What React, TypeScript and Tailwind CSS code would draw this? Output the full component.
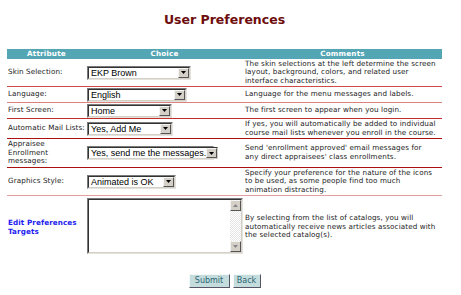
import React from "react";

const verdana = { fontFamily: '"DejaVu Sans", Verdana, sans-serif' };

function Select({ value, width }: { value: string; width: string }) {
  return (
    <div
      className={`flex h-[14px] items-stretch bg-white border-t-[#7a7a7a] border-l-[#7a7a7a] border-b-[#e4e2dc] border-r-[#e4e2dc] border ${width}`}
    >
      <div className="flex flex-1 items-stretch border border-t-[#333] border-l-[#333] border-b-[#d4d0c8] border-r-[#d4d0c8]">
        <span
          className="flex-1 overflow-hidden whitespace-nowrap pl-[2px] text-[9px] leading-[10px] text-black"
          style={{ fontFamily: '"Liberation Sans", Arial, sans-serif' }}
        >
          {value}
        </span>
        <span className="flex w-[11px] items-center justify-center bg-[#d4d0c8] border border-t-[#f4f4f4] border-l-[#f4f4f4] border-b-[#555] border-r-[#555]">
          <svg width="5" height="3" viewBox="0 0 5 3">
            <path d="M0 0h5L2.5 3z" fill="#000" />
          </svg>
        </span>
      </div>
    </div>
  );
}

// comment lines are broken where the original page breaks them
function Lines({ lines }: { lines: string[] }) {
  return (
    <>
      {lines.map((l, i) => (
        <div key={i} className="whitespace-nowrap">
          {l}
        </div>
      ))}
    </>
  );
}

function Row({
  h,
  line,
  label,
  choice,
  comment,
}: {
  h: string;
  line: string;
  label: React.ReactNode;
  choice: React.ReactNode;
  comment: string[];
}) {
  return (
    <div className={`grid grid-cols-[79px_157px_199px] items-center border-b ${h} ${line}`}>
      <div className="pl-[1px] text-[7.2px] leading-[8.6px] tracking-[0.1px] text-[#222]">{label}</div>
      <div className="pl-[1px]">{choice}</div>
      <div className="pl-[2px] text-[7.2px] leading-[8.6px] tracking-[0.1px] text-[#222]">
        <Lines lines={comment} />
      </div>
    </div>
  );
}

export default function App() {
  return (
    <div className="w-[461px] h-[295px] bg-white" style={verdana}>
      <div className="ml-[7px] w-[435px]">
        <div className="flex h-[49px] justify-center pt-[12px]">
          <h1 className="text-[12.5px] font-bold leading-[16px] text-[#6e0d0d]">
            User Preferences
          </h1>
        </div>

        {/* header */}
        <div className="grid h-[10px] grid-cols-[79px_157px_199px] items-center bg-[#55a6b5] text-center text-[7.2px] font-bold leading-[10px] tracking-[0.2px] text-white">
          <div>Attribute</div>
          <div>Choice</div>
          <div>Comments</div>
        </div>

        <Row
          h="h-[28px]"
          line="border-[#cf4a4a]"
          label="Skin Selection:"
          choice={<Select value="EKP Brown" width="w-[104px]" />}
          comment={[
            "The skin selections at the left determine the screen",
            "layout, background, colors, and related user",
            "interface characteristics.",
          ]}
        />
        <Row
          h="h-[16px]"
          line="border-[#dc8080]"
          label="Language:"
          choice={<Select value="English" width="w-[100px]" />}
          comment={["Language for the menu messages and labels."]}
        />
        <Row
          h="h-[16px]"
          line="border-[#c52c2c]"
          label="First Screen:"
          choice={<Select value="Home" width="w-[85px]" />}
          comment={["The first screen to appear when you login."]}
        />
        <Row
          h="h-[20px]"
          line="border-[#ad0f0f]"
          label="Automatic Mail Lists:"
          choice={<Select value="Yes, Add Me" width="w-[86px]" />}
          comment={[
            "If yes, you will automatically be added to individual",
            "course mail lists whenever you enroll in the course.",
          ]}
        />
        <Row
          h="h-[29px]"
          line="border-[#ad0f0f]"
          label={
            <>
              Appraisee
              <br />
              Enrollment
              <br />
              messages:
            </>
          }
          choice={<Select value="Yes, send me the messages." width="w-[127px]" />}
          comment={[
            "Send 'enrollment approved' email messages for",
            "any direct appraisees' class enrollments.",
          ]}
        />
        <Row
          h="h-[28px]"
          line="border-[#e4a0a0]"
          label="Graphics Style:"
          choice={<Select value="Animated is OK" width="w-[89px]" />}
          comment={[
            "Specify your preference for the nature of the icons",
            "to be used, as some people find too much",
            "animation distracting.",
          ]}
        />

        {/* targets row */}
        <div className="grid h-[59px] grid-cols-[79px_157px_199px] items-center">
          <div className="pl-[1px] pt-[3px] text-[7.2px] font-bold leading-[9px] tracking-[0.1px] text-[#1c1cf0]">
            Edit Preferences
            <br />
            Targets
          </div>
          <div className="pl-[1px]">
            <div className="flex h-[56px] w-[156px] border border-t-[#7a7a7a] border-l-[#7a7a7a] border-b-[#e4e2dc] border-r-[#e4e2dc] bg-white">
              <div className="flex flex-1 border border-t-[#333] border-l-[#333] border-b-[#d4d0c8] border-r-[#d4d0c8]">
                <div className="flex-1" />
                <div className="flex w-[11px] flex-col justify-between bg-[repeating-conic-gradient(#e6e6e6_0%_25%,#ffffff_0%_50%)] bg-[length:2px_2px]">
                  <span className="flex h-[11px] items-center justify-center bg-[#d4d0c8] border border-t-[#f4f4f4] border-l-[#f4f4f4] border-b-[#555] border-r-[#555]">
                    <svg width="5" height="3" viewBox="0 0 5 3">
                      <path d="M0 3h5L2.5 0z" fill="#888" />
                    </svg>
                  </span>
                  <span className="flex h-[11px] items-center justify-center bg-[#d4d0c8] border border-t-[#f4f4f4] border-l-[#f4f4f4] border-b-[#555] border-r-[#555]">
                    <svg width="5" height="3" viewBox="0 0 5 3">
                      <path d="M0 0h5L2.5 3z" fill="#888" />
                    </svg>
                  </span>
                </div>
              </div>
            </div>
          </div>
          <div className="pl-[2px] pt-[3px] text-[7.2px] leading-[8.6px] tracking-[0.1px] text-[#222]">
            <Lines
              lines={[
                "By selecting from the list of catalogs, you will",
                "automatically receive news articles associated with",
                "the selected catalog(s).",
              ]}
            />
          </div>
        </div>

        {/* buttons */}
        <div className="mt-[19px] flex justify-center gap-[3px]">
          <button className="h-[14px] w-[41px] border border-t-[#f4f8f8] border-l-[#f4f8f8] border-b-[#556] border-r-[#556] bg-[#c4dcdc] text-[8px] leading-[12px] text-[#2d6574]">
            Submit
          </button>
          <button className="h-[14px] w-[28px] border border-t-[#f4f8f8] border-l-[#f4f8f8] border-b-[#556] border-r-[#556] bg-[#c4dcdc] text-[8px] leading-[12px] text-[#2d6574]">
            Back
          </button>
        </div>
      </div>
    </div>
  );
}
